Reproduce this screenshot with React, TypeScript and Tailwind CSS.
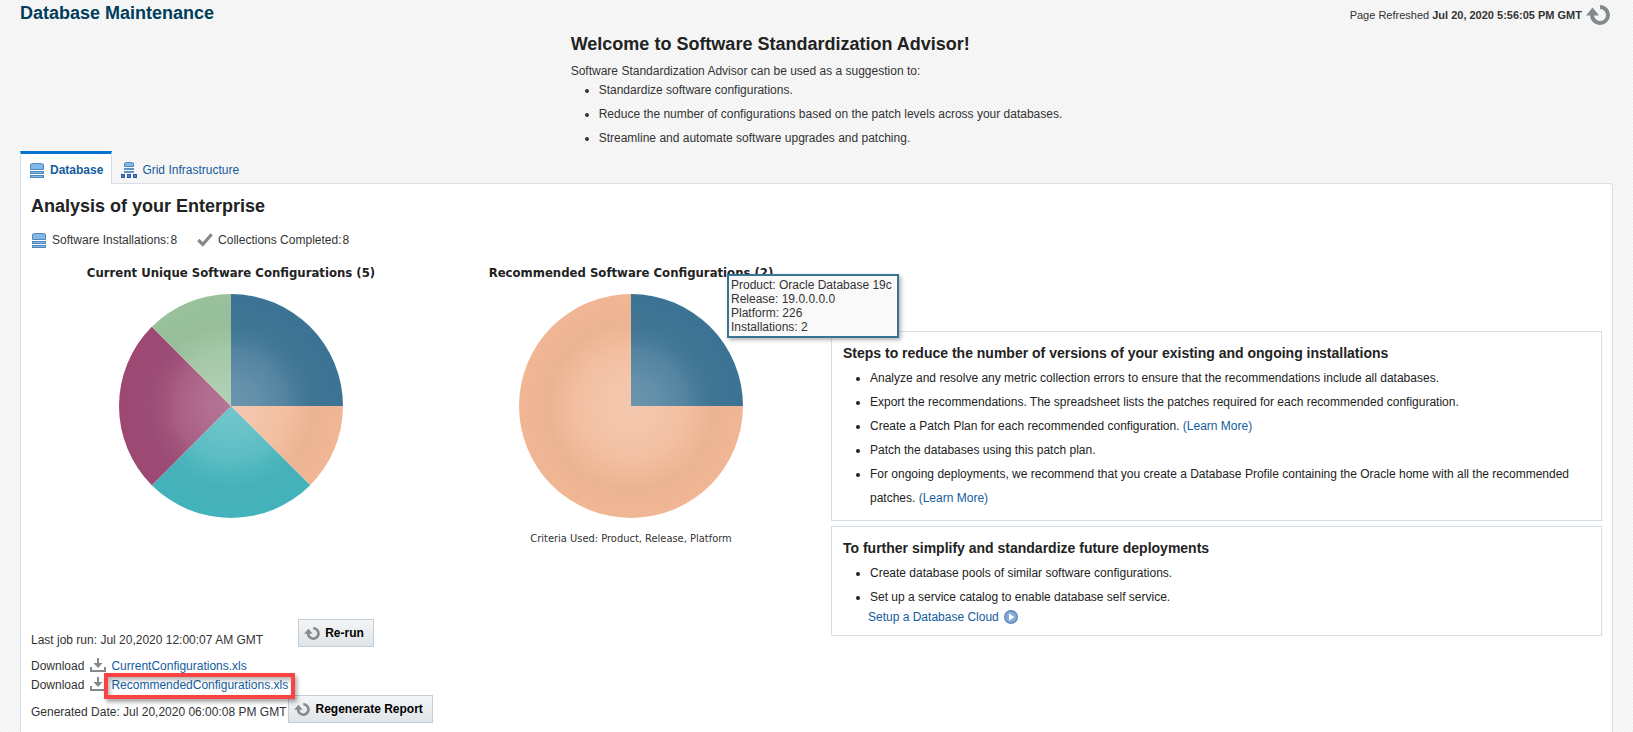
import type { ReactNode } from "react";

type Slice = { label: string; value: number; color: string };

const currentSlices: Slice[] = [
  { label: "Configuration 1", value: 2, color: "#3b7394" },
  { label: "Configuration 2", value: 1, color: "#f1b694" },
  { label: "Configuration 3", value: 2, color: "#43b3bb" },
  { label: "Configuration 4", value: 2, color: "#9d4873" },
  { label: "Configuration 5", value: 1, color: "#98c19c" },
];

const recommendedSlices: Slice[] = [
  { label: "Oracle Database 19c", value: 2, color: "#3b7394" },
  { label: "Other", value: 6, color: "#f1b694" },
];

function Pie({ id, slices }: { id: string; slices: Slice[] }) {
  const total = slices.reduce((sum, s) => sum + s.value, 0);
  const r = 112;
  let angle = 0;
  const paths = slices.map((s) => {
    const sweep = (s.value / total) * Math.PI * 2;
    const x1 = r + r * Math.sin(angle);
    const y1 = r - r * Math.cos(angle);
    angle += sweep;
    const x2 = r + r * Math.sin(angle);
    const y2 = r - r * Math.cos(angle);
    const large = sweep > Math.PI ? 1 : 0;
    return (
      <path
        key={s.label}
        d={`M${r} ${r}L${x1} ${y1}A${r} ${r} 0 ${large} 1 ${x2} ${y2}Z`}
        fill={s.color}
      />
    );
  });
  return (
    <svg width="224" height="224" viewBox="0 0 224 224" aria-hidden="true">
      <defs>
        <radialGradient id={id}>
          <stop offset="0" stopColor="#fff" stopOpacity="0.25" />
          <stop offset="0.25" stopColor="#fff" stopOpacity="0.2" />
          <stop offset="0.5" stopColor="#fff" stopOpacity="0.12" />
          <stop offset="0.62" stopColor="#ddd" stopOpacity="0.06" />
          <stop offset="0.74" stopColor="#888" stopOpacity="0.06" />
          <stop offset="1" stopColor="#888" stopOpacity="0" />
        </radialGradient>
      </defs>
      {paths}
      <circle cx={r} cy={r} r={r} fill={`url(#${id})`} />
    </svg>
  );
}

function RefreshIcon({ className }: { className: string }) {
  return (
    <svg className={className} viewBox="0 0 24 20" aria-hidden="true">
      <path d="M14 2A8 8 0 1 1 6 9.500" fill="none" stroke="#83898d" strokeWidth="4" />
      <path d="M6.500 2.500L0 10.500H13Z" fill="#83898d" />
    </svg>
  );
}

function DatabaseIcon() {
  return (
    <svg width="14" height="15" viewBox="0 0 14 15" className="shrink-0" aria-hidden="true">
      <path
        d="M.5 1.500Q.5 1 1.500 .8Q7 0 12.500 .8Q13.500 1 13.500 1.500V6.500H.5Z"
        fill="#84b8e8"
        stroke="#4f87b8"
      />
      <rect x=".5" y="8.500" width="13" height="2" fill="#84b8e8" stroke="#4f87b8" />
      <rect x=".5" y="12.500" width="13" height="2" fill="#84b8e8" stroke="#4f87b8" />
    </svg>
  );
}

function GridIcon() {
  return (
    <svg width="16" height="16" viewBox="0 0 16 16" className="shrink-0" aria-hidden="true">
      <path
        d="M3.500 1.500Q3.500 1 4.500.8Q8 .2 11.500.8Q12.500 1 12.500 1.500V4.500H3.500Z"
        fill="#84b8e8"
        stroke="#4f87b8"
      />
      <path d="M3 7H13M3 10H13" stroke="#5d93c2" strokeWidth="2" />
      <rect x=".5" y="12.500" width="3" height="3" fill="#4d86cc" stroke="#2a5a9c" />
      <rect x="6.500" y="12.500" width="3" height="3" fill="#4d86cc" stroke="#2a5a9c" />
      <rect x="12.500" y="12.500" width="3" height="3" fill="#4d86cc" stroke="#2a5a9c" />
    </svg>
  );
}

function CheckIcon() {
  return (
    <svg width="16" height="14" viewBox="0 0 16 14" className="shrink-0" aria-hidden="true">
      <path d="M1.300 7L5.800 11.500L14.700 1.300" fill="none" stroke="#83898d" strokeWidth="3.200" />
    </svg>
  );
}

function DownloadIcon() {
  return (
    <svg width="16" height="14" viewBox="0 0 16 14" className="mb-0.5 shrink-0" aria-hidden="true">
      <path d="M1 9V13H15V9" fill="none" stroke="#83898d" strokeWidth="2" />
      <path d="M7 0H9V5H12.500L8 10L3.500 5H7Z" fill="#83898d" />
    </svg>
  );
}

function GoIcon() {
  return (
    <svg width="14" height="14" viewBox="0 0 14 14" className="shrink-0" aria-hidden="true">
      <circle cx="7" cy="7" r="6.300" fill="#86a9da" stroke="#6489bd" strokeWidth="1.400" />
      <path d="M5 3.200L10.300 7L5 10.800Z" fill="#fff" />
    </svg>
  );
}

function ActionButton({ children }: { children: ReactNode }) {
  return (
    <button
      type="button"
      className="flex h-7 items-center gap-[5px] border border-[#c4ced7] bg-linear-to-b from-[#f3f5f6] to-[#e0e5e9] pr-[9px] pl-[5px] font-bold text-black"
    >
      <RefreshIcon className="h-[13px] w-4" />
      {children}
    </button>
  );
}

function Link({ children }: { children: ReactNode }) {
  return (
    <a href="#" className="text-[#145c9e]">
      {children}
    </a>
  );
}

function DownloadRow({ children }: { children: ReactNode }) {
  return (
    <div className="flex h-[19px] items-center gap-[5px]">
      <span className="pr-px">Download</span>
      <DownloadIcon />
      {children}
    </div>
  );
}

function AdviceBox({ title, children }: { title: string; children: ReactNode }) {
  return (
    <section className="border border-[#d6dfe6] px-[11px] pt-3 pb-2.5 text-[#222]">
      <h3 className="text-sm leading-[18px] font-bold">{title}</h3>
      {children}
    </section>
  );
}

export default function App() {
  return (
    <div className="flex min-h-screen flex-col bg-[linear-gradient(45deg,#f1f1f1_25%,#fafafa_25%,#fafafa_50%,#f1f1f1_50%,#f1f1f1_75%,#fafafa_75%)] bg-[length:4px_4px] px-5 font-['Liberation_Sans',Arial,sans-serif] text-xs leading-4 text-[#333]">
      <header className="flex items-start justify-between pt-0.5">
        <h1 className="text-lg leading-[22px] font-bold text-[#003d5b]">Database Maintenance</h1>
        <div className="flex h-[26px] items-center gap-1 pr-[3px] text-[11px]">
          <span>
            Page Refreshed <b>Jul 20, 2020 5:56:05 PM GMT</b>
          </span>
          <button type="button" aria-label="Refresh page">
            <RefreshIcon className="h-5 w-6" />
          </button>
        </div>
      </header>

      <section className="mx-auto mt-[5px]">
        <h2 className="text-lg leading-[22px] font-bold text-[#222]">
          Welcome to Software Standardization Advisor!
        </h2>
        <p className="mt-[9px] leading-[14px]">
          Software Standardization Advisor can be used as a suggestion to:
        </p>
        <ul className="list-disc pl-7 leading-6">
          <li>Standardize software configurations.</li>
          <li>Reduce the number of configurations based on the patch levels across your databases.</li>
          <li>Streamline and automate software upgrades and patching.</li>
        </ul>
      </section>

      <nav className="relative mt-px -mb-px flex h-[33px] text-[#145c9e]">
        <a
          href="#"
          className="flex items-center gap-1.5 border-x border-t-[3px] border-x-[#d6dfe6] border-t-[#0572ce] bg-white pt-0.5 pr-2 pl-[9px] font-bold"
        >
          <DatabaseIcon />
          Database
        </a>
        <a href="#" className="flex items-center gap-[5px] px-[9px] pt-1">
          <GridIcon />
          Grid Infrastructure
        </a>
      </nav>

      <main className="flex-1 rounded-tr border border-b-0 border-[#d6dfe6] bg-white px-2.5 pt-[11px] pb-[9px]">
        <h2 className="text-lg leading-[22px] font-bold text-[#222]">Analysis of your Enterprise</h2>
        <div className="mt-[15px] flex items-center gap-5 pl-px">
          <span className="flex items-center gap-1.5">
            <DatabaseIcon />
            <span className="flex gap-px">
              Software Installations:<span>8</span>
            </span>
          </span>
          <span className="flex items-center gap-[5px]">
            <CheckIcon />
            <span className="flex gap-px">
              Collections Completed:<span>8</span>
            </span>
          </span>
        </div>

        <div className="mt-[17px] flex">
          <div className="shrink-0">
            <div className="flex">
              <figure className="flex w-[400px] flex-col items-center">
                <figcaption className="font-['DejaVu_Sans_Condensed','DejaVu_Sans',sans-serif] text-[13px] font-bold text-[#222]">
                  Current Unique Software Configurations (5)
                </figcaption>
                <div className="mt-[13px]">
                  <Pie id="shade-current" slices={currentSlices} />
                </div>
              </figure>
              <figure className="relative flex w-[400px] flex-col items-center font-['DejaVu_Sans_Condensed','DejaVu_Sans',sans-serif]">
                <figcaption className="text-[13px] font-bold text-[#222]">
                  Recommended Software Configurations (2)
                </figcaption>
                <div className="mt-[13px]">
                  <Pie id="shade-recommended" slices={recommendedSlices} />
                </div>
                <p className="mt-[13px] text-[11px]">Criteria Used: Product, Release, Platform</p>
                <div
                  role="tooltip"
                  className="absolute top-[9px] left-[296px] z-10 w-[172px] border-2 border-[#3b7394] bg-[#f9f9f9] p-0.5 font-['Liberation_Sans',Arial,sans-serif] leading-[14px] whitespace-nowrap shadow-[2px_2px_4px_rgba(0,0,0,0.3)]"
                >
                  <p>Product: Oracle Database 19c</p>
                  <p>Release: 19.0.0.0.0</p>
                  <p>Platform: 226</p>
                  <p>Installations: 2</p>
                </div>
              </figure>
            </div>

            <div className="mt-[72px] flex items-start gap-[35px]">
              <span className="pt-[13px]">Last job run: Jul 20,2020 12:00:07 AM GMT</span>
              <ActionButton>Re-run</ActionButton>
            </div>
            <div className="mt-2">
              <DownloadRow>
                <Link>CurrentConfigurations.xls</Link>
              </DownloadRow>
              <DownloadRow>
                <span className="relative">
                  <Link>RecommendedConfigurations.xls</Link>
                  <span className="pointer-events-none absolute -inset-x-[7px] -top-1 -bottom-1.5 z-10 border-4 border-[#fa4343] shadow-[2px_3px_4px_rgba(0,0,0,0.35),inset_2px_3px_4px_rgba(0,0,0,0.3)]" />
                </span>
              </DownloadRow>
            </div>
            <div className="mt-px flex items-center gap-0.5">
              <span className="pt-1.5">Generated Date: Jul 20,2020 06:00:08 PM GMT</span>
              <ActionButton>Regenerate Report</ActionButton>
            </div>
          </div>

          <aside className="mt-[66px] flex min-w-0 flex-1 flex-col gap-[5px]">
            <AdviceBox title="Steps to reduce the number of versions of your existing and ongoing installations">
              <ul className="mt-1 list-disc pl-[27px] leading-6">
                <li>
                  Analyze and resolve any metric collection errors to ensure that the recommendations
                  include all databases.
                </li>
                <li>
                  Export the recommendations. The spreadsheet lists the patches required for each
                  recommended configuration.
                </li>
                <li>
                  Create a Patch Plan for each recommended configuration. <Link>(Learn More)</Link>
                </li>
                <li>Patch the databases using this patch plan.</li>
                <li>
                  For ongoing deployments, we recommend that you create a Database Profile containing
                  the Oracle home with all the recommended{" "}
                  <span>
                    patches. <Link>(Learn More)</Link>
                  </span>
                </li>
              </ul>
            </AdviceBox>
            <AdviceBox title="To further simplify and standardize future deployments">
              <ul className="mt-1 list-disc pl-[27px] leading-6">
                <li>Create database pools of similar software configurations.</li>
                <li>Set up a service catalog to enable database self service.</li>
              </ul>
              <a href="#" className="ml-[25px] flex w-fit items-center gap-[5px] text-[#145c9e]">
                Setup a Database Cloud
                <GoIcon />
              </a>
            </AdviceBox>
          </aside>
        </div>
      </main>
    </div>
  );
}
